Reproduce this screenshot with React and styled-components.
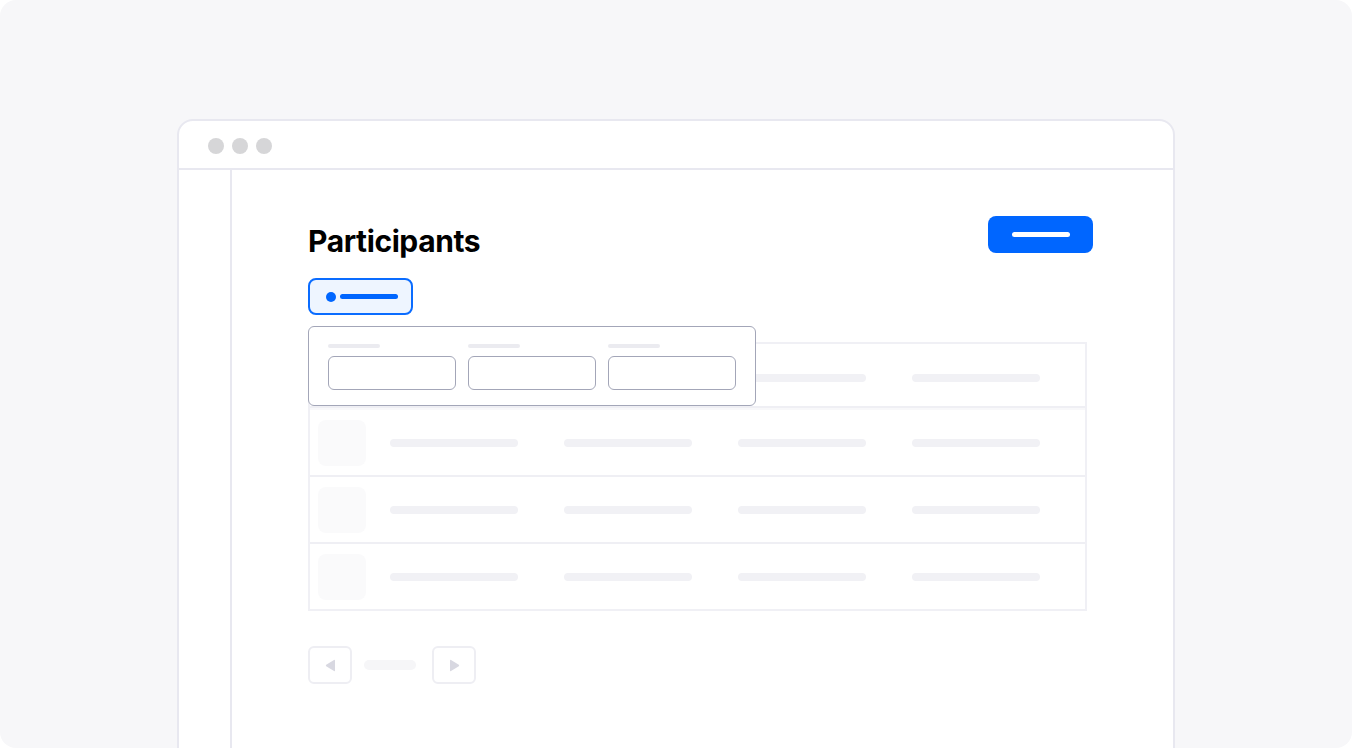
import React from 'react';
import styled, { createGlobalStyle } from 'styled-components';

const GlobalStyle = createGlobalStyle`
  html, body {
    margin: 0;
    padding: 0;
    background: #ffffff;
  }
  body {
    font-family: Inter, "Noto Sans", sans-serif;
  }
`

const Page = styled.div`
  width: 1352px;
  height: 748px;
  background: #f7f7f9;
  border-radius: 16px;
  overflow: hidden;
  padding: 119px 0 0 177px;
  box-sizing: border-box;
`

const Window = styled.div`
  width: 998px;
  height: 660px;
  background: #ffffff;
  border: 2px solid #e8e8f0;
  border-radius: 16px 16px 0 0;
  box-sizing: border-box;
  display: flex;
  flex-direction: column;
`

const TitleBar = styled.div`
  height: 49px;
  border-bottom: 2px solid #e8e8f0;
  display: flex;
  align-items: center;
  gap: 8px;
  padding-left: 29px;
  padding-top: 2px;
  box-sizing: border-box;
`

const Dot = styled.span`
  width: 16px;
  height: 16px;
  border-radius: 50%;
  background: #d6d6d8;
`

const Body = styled.div`
  flex: 1;
  display: flex;
`

const Sidebar = styled.div`
  width: 51px;
  border-right: 2px solid #e8e8f0;
`

const Main = styled.div`
  flex: 1;
  padding: 46px 80px 0 76px;
`

const Header = styled.div`
  height: 37px;
  display: flex;
  justify-content: space-between;
  align-items: flex-start;
`

const Title = styled.h1`
  margin: 7px 0 0;
  font-family: Inter, "Noto Sans", sans-serif;
  font-weight: 700;
  font-size: 30px;
  line-height: 36px;
  letter-spacing: -0.4px;
  color: #000000;
`

const PrimaryButton = styled.button`
  width: 105px;
  height: 37px;
  border: none;
  border-radius: 8px;
  background: #0066ff;
  display: flex;
  align-items: center;
  justify-content: center;
  padding: 0;
`

const Line = styled.span`
  display: block;
  width: ${props => props.w}px;
  height: ${props => props.h || 5}px;
  border-radius: 4px;
  background: ${props => props.color};
`

const FilterWrap = styled.div`
  position: relative;
  margin-top: 25px;
  width: 105px;
`

const FilterChip = styled.button`
  width: 105px;
  height: 37px;
  border: 2px solid #0a6cff;
  border-radius: 8px;
  background: #eef5ff;
  display: flex;
  align-items: center;
  gap: 4px;
  padding: 0 0 0 16px;
  box-sizing: border-box;
`

const ChipDot = styled.span`
  width: 10px;
  height: 10px;
  border-radius: 50%;
  background: #0066ff;
`

const Dropdown = styled.div`
  position: absolute;
  top: 48px;
  left: 0;
  width: 448px;
  height: 80px;
  box-sizing: border-box;
  background: #ffffff;
  border: 1px solid #a3a6b8;
  border-radius: 6px;
  padding: 17px 19px 0;
  display: flex;
  gap: 12px;
  z-index: 2;
`

const Field = styled.div`
  display: flex;
  flex-direction: column;
  gap: 8px;
`

const Input = styled.div`
  width: 128px;
  height: 34px;
  box-sizing: border-box;
  border: 1px solid #a3a6b8;
  border-radius: 6px;
`

const Table = styled.div`
  margin-top: 27px;
  width: 779px;
  border: 2px solid #f0f0f5;
  box-sizing: border-box;
`

const HeadRow = styled.div`
  height: 64px;
  box-sizing: border-box;
  padding: 6px 0 0 80px;
  display: flex;
  align-items: center;
  gap: 46px;
  border-bottom: 2px solid #efeff4;
`

const Row = styled.div`
  height: 67px;
  box-sizing: border-box;
  padding: 0 0 0 8px;
  display: flex;
  align-items: center;
  border-top: 2px solid ${props => props.first ? '#f8f8fa' : '#efeff4'};
`

const Avatar = styled.div`
  width: 48px;
  height: 46px;
  border-radius: 8px;
  background: #fafafb;
  margin-right: 24px;
`

const Cells = styled.div`
  display: flex;
  gap: 46px;
`

const Pager = styled.div`
  margin-top: 35px;
  display: flex;
  align-items: center;
`

const PageButton = styled.button`
  width: 44px;
  height: 38px;
  border: 2px solid #eeeef3;
  border-radius: 6px;
  background: #ffffff;
  display: flex;
  align-items: center;
  justify-content: center;
  padding: 0;
`

const PageLabel = styled.span`
  width: 52px;
  height: 10px;
  border-radius: 5px;
  background: #f6f6f8;
  margin: 0 16px 0 12px;
`

const Triangle = ({ dir }) => (
  <svg width="11" height="13" viewBox="0 0 11 13">
    {dir === 'left'
      ? <path d="M10 1.5 L10 11.5 Q10 12.6 9 12 L1.2 7.2 Q0.4 6.5 1.2 5.8 L9 1 Q10 0.4 10 1.5 Z" fill="#d8d8e1" />
      : <path d="M1 1.5 L1 11.5 Q1 12.6 2 12 L9.8 7.2 Q10.6 6.5 9.8 5.8 L2 1 Q1 0.4 1 1.5 Z" fill="#d8d8e1" />}
  </svg>
)

const rows = [0, 1, 2]
const cols = [0, 1, 2, 3]

export default class App extends React.Component {
  render() {
    return (
      <Page>
        <GlobalStyle />
        <Window>
          <TitleBar>
            <Dot />
            <Dot />
            <Dot />
          </TitleBar>
          <Body>
            <Sidebar />
            <Main>
              <Header>
                <Title>Participants</Title>
                <PrimaryButton>
                  <Line w={58} color="#ffffff" />
                </PrimaryButton>
              </Header>
              <FilterWrap>
                <FilterChip>
                  <ChipDot />
                  <Line w={58} color="#0066ff" />
                </FilterChip>
                <Dropdown>
                  {[0, 1, 2].map(i => (
                    <Field key={i}>
                      <Line w={52} h={4} color="#ebebf0" />
                      <Input />
                    </Field>
                  ))}
                </Dropdown>
              </FilterWrap>
              <Table>
                <HeadRow>
                  {cols.map(c => <Line key={c} w={128} h={8} color="#f1f1f5" />)}
                </HeadRow>
                {rows.map(r => (
                  <Row key={r} first={r === 0}>
                    <Avatar />
                    <Cells>
                      {cols.map(c => <Line key={c} w={128} h={8} color="#f1f1f5" />)}
                    </Cells>
                  </Row>
                ))}
              </Table>
              <Pager>
                <PageButton><Triangle dir="left" /></PageButton>
                <PageLabel />
                <PageButton><Triangle dir="right" /></PageButton>
              </Pager>
            </Main>
          </Body>
        </Window>
      </Page>
    )
  }
}
